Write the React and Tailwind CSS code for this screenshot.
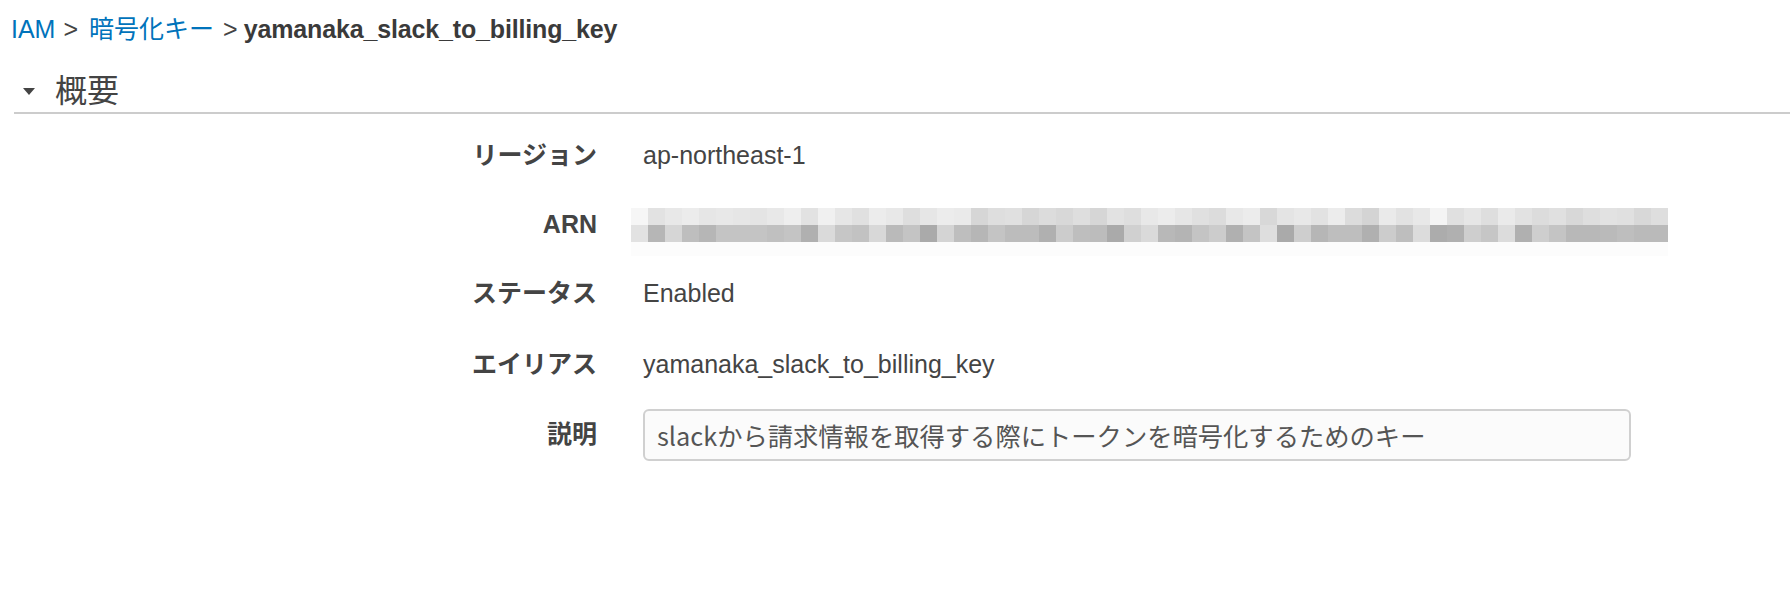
// KMS key detail page - summary section

const FONT = '"Liberation Sans", "Noto Sans CJK JP", sans-serif';

// pixelated ARN placeholder (the original value is mosaicked)
const TOP_ROW = [
  246, 226, 232, 236, 230, 232, 230, 228, 232, 238, 226, 240, 230, 224, 236, 232, 222, 230, 236, 234,
  214, 222, 224, 214, 220, 216, 222, 214, 226, 222, 232, 236, 230, 224, 220, 232, 236, 216, 228, 232,
  226, 236, 220, 212, 234, 226, 232, 244, 224, 230, 222, 234, 226, 220, 224, 216, 222, 226, 224, 216, 222,
];
const BOTTOM_ROW = [
  226, 182, 214, 190, 182, 196, 196, 196, 192, 196, 176, 218, 198, 194, 216, 186, 196, 170, 212, 190,
  182, 196, 188, 188, 176, 204, 190, 188, 170, 208, 218, 184, 180, 196, 204, 176, 196, 222, 170, 206,
  182, 190, 190, 176, 204, 190, 220, 172, 176, 206, 198, 220, 176, 206, 196, 184, 184, 186, 190, 186, 186,
];

function Mosaic() {
  return (
    <div className="flex flex-col">
      {[TOP_ROW, BOTTOM_ROW].map((row, r) => (
        <div key={r} className="flex">
          {row.map((v, i) => (
            <div
              key={i}
              className="w-[17px] h-[17px]"
              style={{ backgroundColor: `rgb(${v}, ${v}, ${v})` }}
            />
          ))}
        </div>
      ))}
      <div className="h-[14px] w-[1037px] bg-[#fcfcfc]" />
    </div>
  );
}

function Row({ label, height, children }) {
  return (
    <div className={`flex items-center ${height}`}>
      <div className="w-[597px] shrink-0 text-right font-bold text-[#444]">{label}</div>
      <div className="pl-[46px] flex-1 text-[#444]">{children}</div>
    </div>
  );
}

export default function App() {
  return (
    <div className="w-[1790px] h-[616px] bg-white text-[25px] overflow-hidden" style={{ fontFamily: FONT }}>
      {/* Breadcrumb */}
      <nav className="flex items-center h-[34px] mt-[13px] pl-[11px] text-[25px] text-[#444]">
        <a href="#" className="text-[#0073bb]">IAM</a>
        <span className="ml-[8px] mr-[11px]">&gt;</span>
        <a href="#" className="text-[#0073bb]">暗号化キー</a>
        <span className="ml-[9px] mr-[6px]">&gt;</span>
        <span className="font-bold text-[#3a3a3a] tracking-[-0.15px]">yamanaka_slack_to_billing_key</span>
      </nav>

      {/* Section header */}
      <div className="mt-[23px] ml-[14px] h-[44px] flex items-center border-b-2 border-[#cccccc]">
        <svg width="12" height="7" viewBox="0 0 12 7" className="ml-[9px]">
          <path d="M0 0 L12 0 L6 7 Z" fill="#444" />
        </svg>
        <span className="ml-[20px] text-[32px] text-[#444] leading-none">概要</span>
      </div>

      {/* Summary rows */}
      <div className="flex flex-col mt-[7px]">
        <Row label="リージョン" height="h-[70px]">ap-northeast-1</Row>
        <Row label="ARN" height="h-[67px]">
          <div className="-ml-[12px] pt-[14px]">
            <Mosaic />
          </div>
        </Row>
        <Row label="ステータス" height="h-[71px]">Enabled</Row>
        <Row label="エイリアス" height="h-[71px]">yamanaka_slack_to_billing_key</Row>
        <Row label="説明" height="h-[70px]">
          <input
            readOnly
            value="slackから請求情報を取得する際にトークンを暗号化するためのキー"
            className="w-[988px] h-[52px] px-[12px] rounded-[6px] border-2 border-[#d0d0d0] bg-[#fbfbfb] text-[25.3px] text-[#555] outline-none"
            style={{ fontFamily: '"Noto Sans CJK JP", sans-serif' }}
          />
        </Row>
      </div>
    </div>
  );
}
